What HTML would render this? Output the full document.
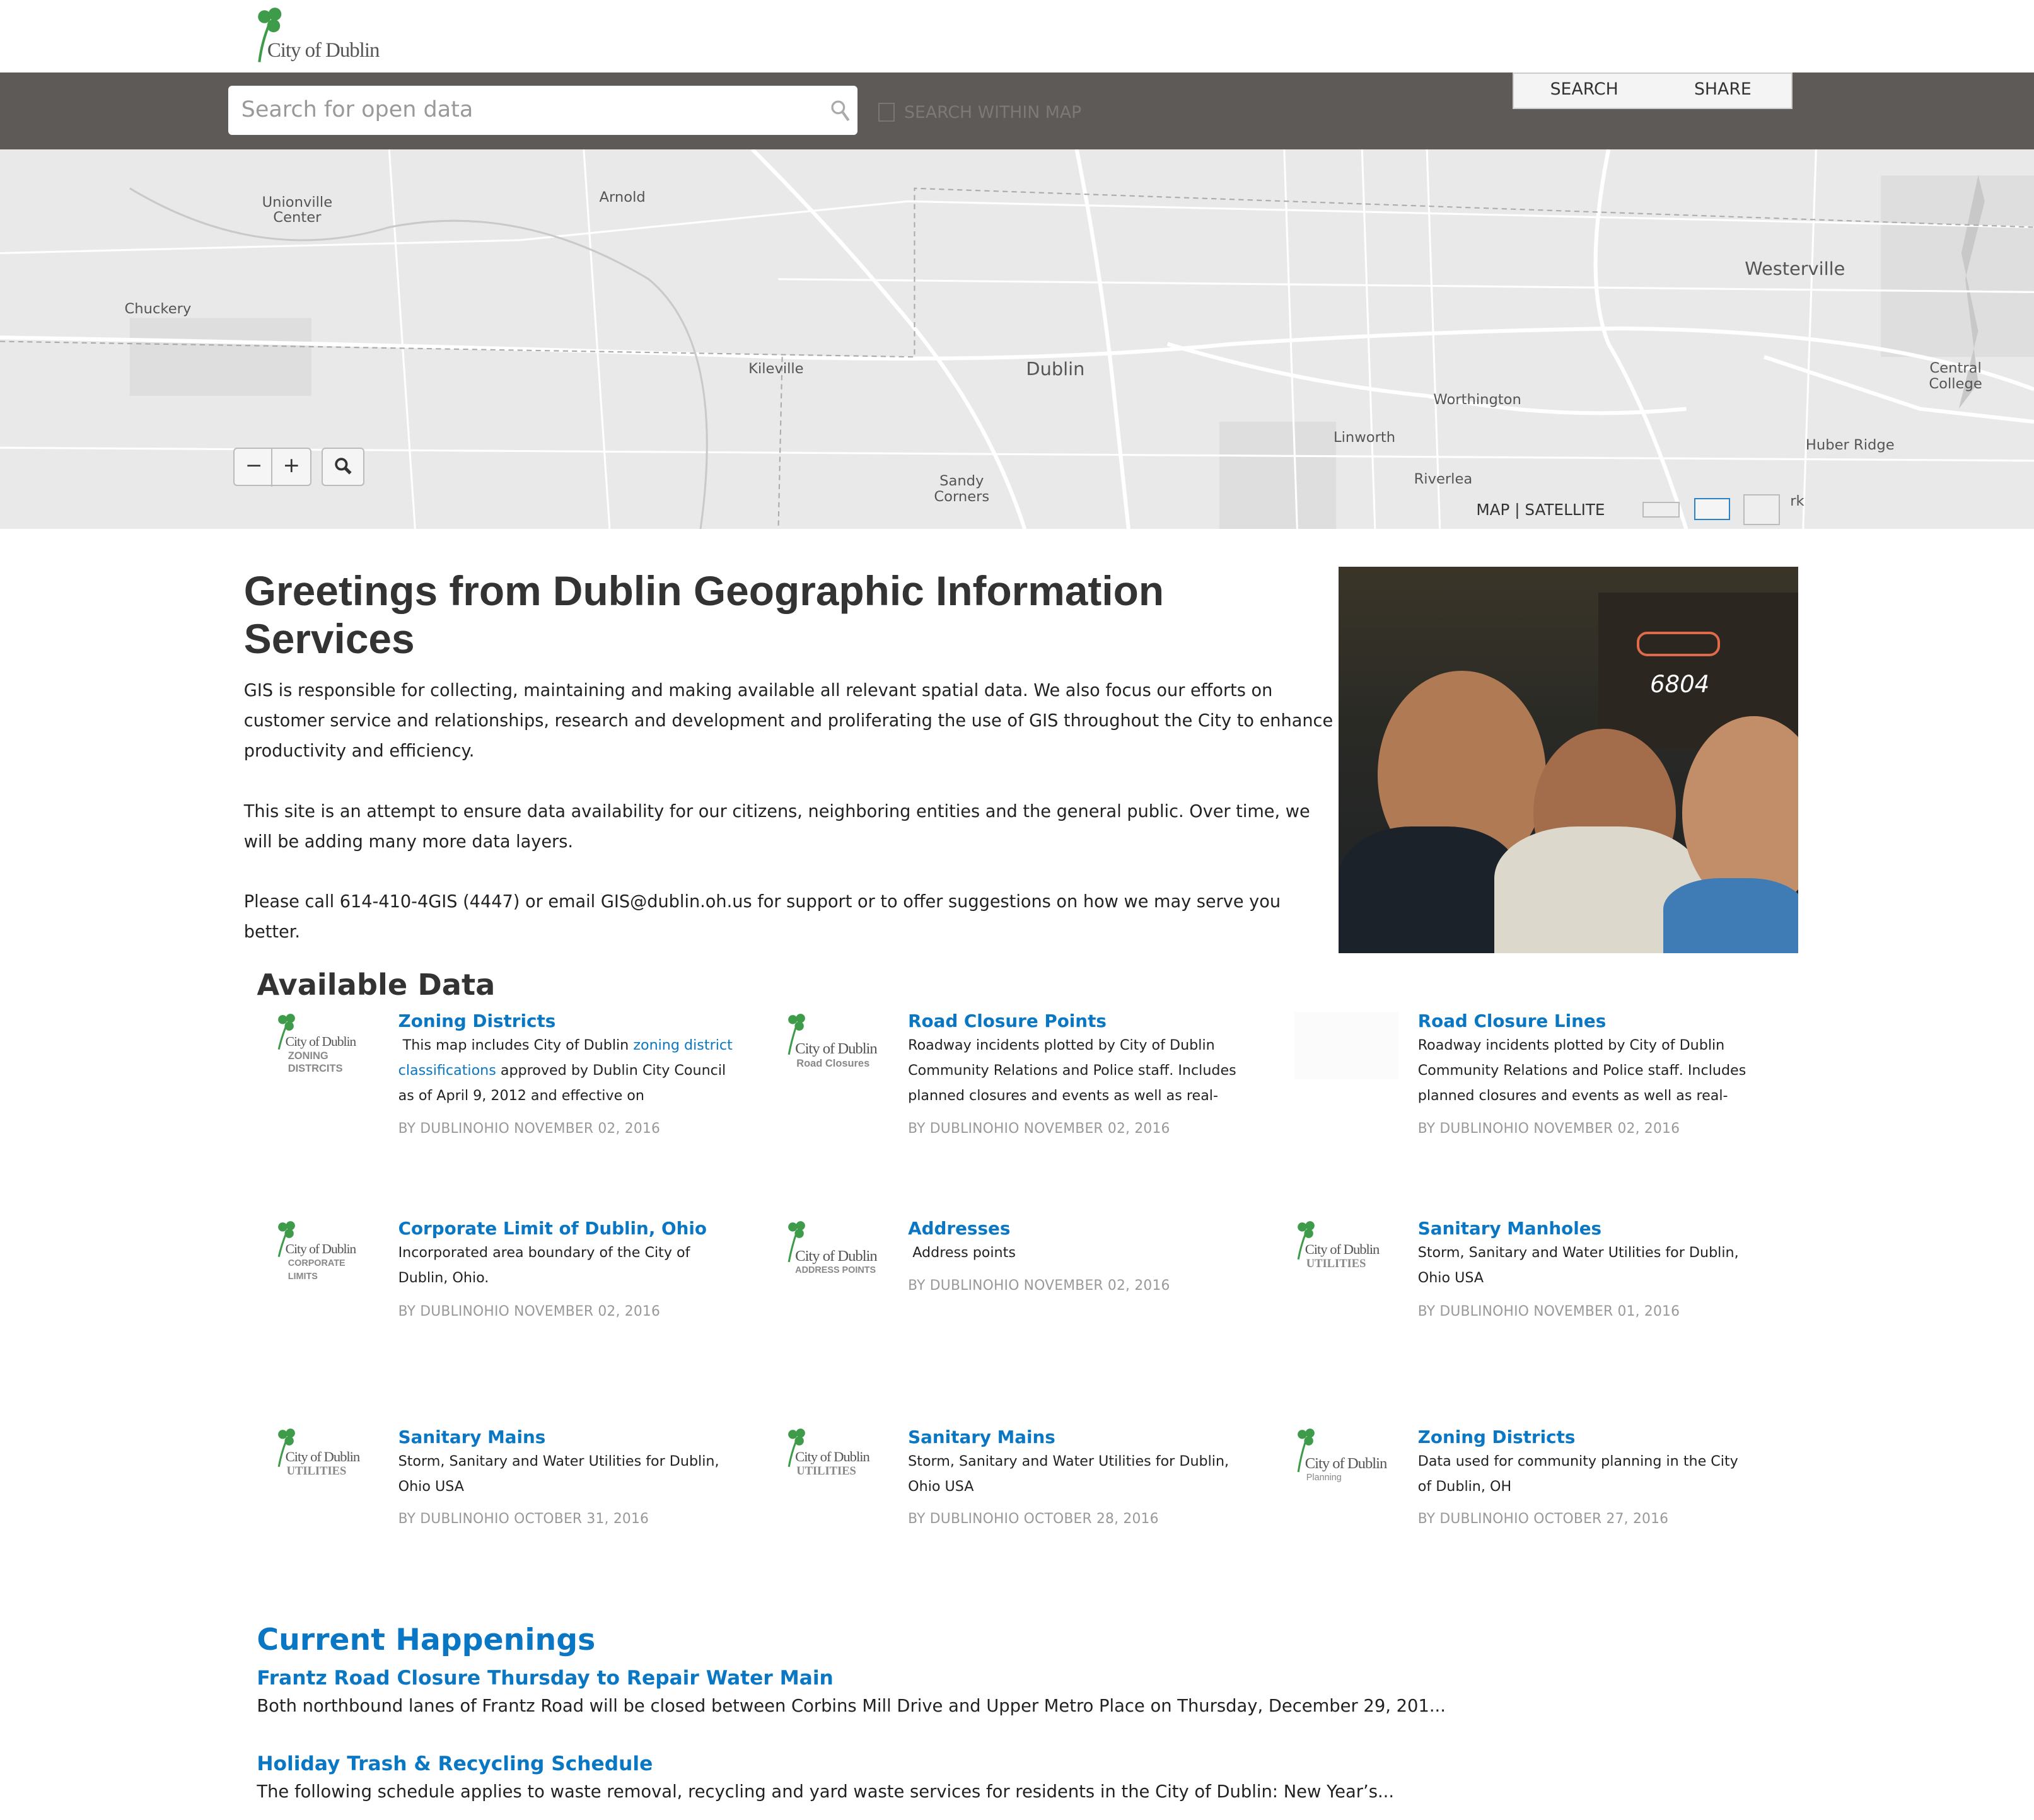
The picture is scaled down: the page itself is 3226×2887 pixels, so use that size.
<!DOCTYPE html>
<html><head><meta charset="utf-8"><style>
html{zoom:2.0574}
body{margin:0;width:1568px;height:1403px;position:relative;overflow:hidden;font-family:"DejaVu Sans","Liberation Sans",sans-serif;background:#fff;color:#222}
.a{position:absolute}
.blue{color:#0a77c4}
.t{font-size:13.5px;font-weight:bold;color:#0a77c4}
.d{font-size:10.8px;line-height:19.5px;color:#222}
.m{font-size:10.6px;color:#999;letter-spacing:.1px}
.lbl{font-size:11px;color:#555}
.logo{font-family:"Liberation Serif",serif;color:#555;font-size:11px;letter-spacing:-.5px}
.logo small{display:block;font-family:"Liberation Sans",sans-serif;font-weight:bold;color:#888;font-size:8px;letter-spacing:0}
p{margin:0}
</style></head><body>

<svg class="a" style="left:195px;top:4px" width="32" height="45" viewBox="0 0 32 45"><g fill="#3d9b4a"><circle cx="9" cy="9" r="5"/><circle cx="17" cy="7" r="5"/><circle cx="16" cy="16" r="5"/></g><path d="M13 14 Q7 28 5 44" stroke="#3d9b4a" stroke-width="2" fill="none"/></svg>
<div class="a logo" style="left:206px;top:30px;font-size:16px">City of Dublin</div>

<div class="a" style="left:0;top:56px;width:1568px;height:59px;background:#5d5a58"></div>
<div class="a" style="left:176px;top:66px;width:485px;height:38px;background:#fff;border-radius:3px"></div>
<div class="a" style="left:186px;top:75px;font-size:17px;color:#999">Search for open data</div>
<svg class="a" style="left:640px;top:77px" width="16" height="18"><circle cx="6" cy="6" r="4.5" stroke="#aaa" stroke-width="1.6" fill="none"/><path d="M9 9 L14 16" stroke="#aaa" stroke-width="2"/></svg>
<div class="a" style="left:677px;top:79px;width:11px;height:13px;border:1px solid #777"></div>
<div class="a" style="left:697px;top:79px;font-size:13px;color:#7c7978">SEARCH WITHIN MAP</div>
<div class="a" style="left:1166px;top:56px;width:214px;height:26px;background:#f4f4f4;border:1px solid #ccc"></div>
<div class="a" style="left:1195px;top:61px;font-size:13px;color:#333">SEARCH</div>
<div class="a" style="left:1306px;top:61px;font-size:13px;color:#333">SHARE</div>

<div class="a" style="left:0;top:115px;width:1568px;height:293px;background:#e9e9e9;overflow:hidden">
<svg width="1568" height="293" style="position:absolute;left:0;top:0">
<g fill="#dedede"><rect x="940" y="210" width="90" height="83"/><rect x="1450" y="20" width="118" height="140"/><rect x="100" y="130" width="140" height="60"/></g>
<path d="M1520 0 L1530 40 L1515 100 L1525 180 L1510 200 L1525 140 L1512 80 L1525 20Z" fill="#c8c8c8"/>
<g stroke="#fff" stroke-width="3" fill="none">
<path d="M0 145 Q300 150 600 160 Q800 165 950 150 Q1100 140 1250 138 Q1450 140 1568 185"/>
<path d="M580 0 Q640 60 690 120 Q760 200 790 293"/>
<path d="M830 0 Q850 100 860 200 L870 293"/>
<path d="M1240 0 Q1220 100 1240 150 Q1270 200 1300 293"/>
<path d="M900 150 Q1000 180 1100 190 Q1200 210 1300 200"/>
<path d="M1360 160 Q1420 180 1480 200 L1568 210"/>
</g>
<g stroke="#fff" stroke-width="1.5" fill="none">
<path d="M0 80 L400 70 L700 40 L1568 60"/><path d="M300 0 L320 293"/><path d="M450 0 L470 293"/><path d="M990 0 L1000 293"/><path d="M1100 0 L1110 293"/><path d="M1400 0 L1390 293"/><path d="M0 230 L1568 240"/><path d="M600 100 L1568 110"/><path d="M1050 0 L1060 293"/>
</g>
<g stroke="#aaa" stroke-width="1" stroke-dasharray="4 3" fill="none"><path d="M0 148 L705 160 L705 30 L1568 60"/><path d="M603 160 L600 293"/></g>
<path d="M100 30 Q200 90 300 60 Q400 40 500 100 Q560 150 540 293" stroke="#c9c9c9" stroke-width="1.5" fill="none"/>
</svg>
<div class="a lbl" style="left:202px;top:35px;text-align:center;line-height:12px">Unionville<br>Center</div>
<div class="a lbl" style="left:462px;top:31px">Arnold</div>
<div class="a lbl" style="left:96px;top:117px">Chuckery</div>
<div class="a lbl" style="left:577px;top:163px">Kileville</div>
<div class="a" style="left:791px;top:161px;font-size:14px;color:#555">Dublin</div>
<div class="a" style="left:1345px;top:84px;font-size:14px;color:#555">Westerville</div>
<div class="a lbl" style="left:1105px;top:187px">Worthington</div>
<div class="a lbl" style="left:1028px;top:216px">Linworth</div>
<div class="a lbl" style="left:1487px;top:163px;text-align:center;line-height:12px">Central<br>College</div>
<div class="a lbl" style="left:1392px;top:222px">Huber Ridge</div>
<div class="a lbl" style="left:1090px;top:248px">Riverlea</div>
<div class="a lbl" style="left:720px;top:250px;text-align:center;line-height:12px">Sandy<br>Corners</div>
<div class="a lbl" style="left:1380px;top:265px">rk</div>
</div>
<div class="a" style="left:180px;top:345px;width:58px;height:28px;background:#f5f5f5;border:1px solid #bbb;border-radius:3px"></div>
<div class="a" style="left:209px;top:345px;width:1px;height:30px;background:#bbb"></div>
<div class="a" style="left:189px;top:349px;font-size:16px;color:#333">−</div>
<div class="a" style="left:218px;top:349px;font-size:16px;color:#333">+</div>
<div class="a" style="left:248px;top:345px;width:31px;height:28px;background:#f5f5f5;border:1px solid #bbb;border-radius:3px"></div>
<svg class="a" style="left:257px;top:352px" width="15" height="15"><circle cx="6" cy="6" r="4" stroke="#333" stroke-width="1.8" fill="none"/><path d="M9 9 L13 13" stroke="#333" stroke-width="2.5"/></svg>
<div class="a" style="left:1138px;top:386px;font-size:12px;color:#333">MAP | SATELLITE</div>
<div class="a" style="left:1266px;top:387px;width:27px;height:10px;border:1px solid #bbb;background:#eee"></div>
<div class="a" style="left:1306px;top:384px;width:26px;height:15px;border:1px solid #2a82c8;background:#f5f5f5"></div>
<div class="a" style="left:1344px;top:381px;width:26px;height:22px;border:1px solid #bbb;background:#eee"></div>

<div class="a" style="left:188px;top:437px;font-family:'Liberation Sans',sans-serif;font-size:32px;font-weight:bold;color:#333;line-height:37px;width:830px">Greetings from Dublin Geographic Information Services</div>
<div class="a" style="left:188px;top:521px;width:840px;font-size:13.2px;line-height:23.3px;color:#222">
<p>GIS is responsible for collecting, maintaining and making available all relevant spatial data. We also focus our efforts on customer service and relationships, research and development and proliferating the use of GIS throughout the City to enhance productivity and efficiency.</p><br>
<p>This site is an attempt to ensure data availability for our citizens, neighboring entities and the general public. Over time, we will be adding many more data layers.</p><br>
<p>Please call 614-410-4GIS (4447) or email GIS@dublin.oh.us for support or to offer suggestions on how we may serve you better.</p>
</div>
<div class="a" style="left:1032px;top:437px;width:354px;height:298px;overflow:hidden;background:linear-gradient(180deg,#3a3528 0%,#2a2a25 40%,#1e2228 100%)">
<div class="a" style="left:200px;top:20px;width:154px;height:120px;background:#2b2620"></div>
<div class="a" style="left:240px;top:80px;font-size:18px;color:#fff;font-style:italic">6804</div>
<div class="a" style="left:230px;top:50px;width:60px;height:15px;border:2px solid #e06a4a;border-radius:8px"></div>
<div class="a" style="left:30px;top:80px;width:130px;height:160px;border-radius:50%;background:#b07a55"></div>
<div class="a" style="left:0;top:200px;width:140px;height:100px;background:#1c222a;border-radius:40% 40% 0 0"></div>
<div class="a" style="left:150px;top:125px;width:110px;height:130px;border-radius:50%;background:#a36c4a"></div>
<div class="a" style="left:120px;top:200px;width:160px;height:100px;background:#ddd8cc;border-radius:40% 40% 0 0"></div>
<div class="a" style="left:265px;top:115px;width:110px;height:150px;border-radius:50%;background:#c28e6a"></div>
<div class="a" style="left:250px;top:240px;width:110px;height:60px;background:#3f7bb5;border-radius:40% 40% 0 0"></div>
</div>

<div class="a" style="left:198px;top:746px;font-size:22.5px;font-weight:bold;color:#333">Available Data</div>

<svg class="a" style="left:212px;top:780px" width="20" height="30"><g fill="#3d9b4a"><circle cx="6" cy="6" r="3.5"/><circle cx="12" cy="5" r="3.5"/><circle cx="11" cy="11" r="3.5"/></g><path d="M9 10 Q5 20 3 29" stroke="#3d9b4a" stroke-width="1.5" fill="none"/></svg>
<div class="a logo" style="left:220px;top:797px;font-size:10.5px">City of Dublin<small style="margin-left:2px;line-height:10px">ZONING<br>DISTRCITS</small></div>
<div class="a t" style="left:307px;top:779px">Zoning Districts</div>
<div class="a d" style="left:307px;top:796px;width:260px">&nbsp;This map includes City of Dublin <span class="blue">zoning district classifications</span> approved by Dublin City Council as of April 9, 2012 and effective on</div>
<div class="a m" style="left:307px;top:864px">BY DUBLINOHIO NOVEMBER 02, 2016</div>

<svg class="a" style="left:605px;top:780px" width="20" height="34"><g fill="#3d9b4a"><circle cx="6" cy="6" r="3.5"/><circle cx="12" cy="5" r="3.5"/><circle cx="11" cy="11" r="3.5"/></g><path d="M9 10 Q5 22 3 33" stroke="#3d9b4a" stroke-width="1.5" fill="none"/></svg>
<div class="a logo" style="left:613px;top:802px;font-size:12px">City of Dublin<small style="font-size:8px;margin-left:1px">Road Closures</small></div>
<div class="a t" style="left:700px;top:779px">Road Closure Points</div>
<div class="a d" style="left:700px;top:796px;width:260px">Roadway incidents plotted by City of Dublin Community Relations and Police staff. Includes planned closures and events as well as real-</div>
<div class="a m" style="left:700px;top:864px">BY DUBLINOHIO NOVEMBER 02, 2016</div>

<div class="a" style="left:998px;top:780px;width:80px;height:52px;background:#fbfbfb"></div>
<div class="a t" style="left:1093px;top:779px">Road Closure Lines</div>
<div class="a d" style="left:1093px;top:796px;width:260px">Roadway incidents plotted by City of Dublin Community Relations and Police staff. Includes planned closures and events as well as real-</div>
<div class="a m" style="left:1093px;top:864px">BY DUBLINOHIO NOVEMBER 02, 2016</div>

<svg class="a" style="left:212px;top:940px" width="20" height="30"><g fill="#3d9b4a"><circle cx="6" cy="6" r="3.5"/><circle cx="12" cy="5" r="3.5"/><circle cx="11" cy="11" r="3.5"/></g><path d="M9 10 Q5 20 3 29" stroke="#3d9b4a" stroke-width="1.5" fill="none"/></svg>
<div class="a logo" style="left:220px;top:957px;font-size:10.5px">City of Dublin<small style="font-size:7px;line-height:10px;margin-left:2px">CORPORATE<br>LIMITS</small></div>
<div class="a t" style="left:307px;top:939px">Corporate Limit of Dublin, Ohio</div>
<div class="a d" style="left:307px;top:956px;width:240px">Incorporated area boundary of the City of Dublin, Ohio.</div>
<div class="a m" style="left:307px;top:1005px">BY DUBLINOHIO NOVEMBER 02, 2016</div>

<svg class="a" style="left:605px;top:940px" width="20" height="34"><g fill="#3d9b4a"><circle cx="6" cy="6" r="3.5"/><circle cx="12" cy="5" r="3.5"/><circle cx="11" cy="11" r="3.5"/></g><path d="M9 10 Q5 22 3 33" stroke="#3d9b4a" stroke-width="1.5" fill="none"/></svg>
<div class="a logo" style="left:613px;top:962px;font-size:12px">City of Dublin<small style="font-size:7px">ADDRESS POINTS</small></div>
<div class="a t" style="left:700px;top:939px">Addresses</div>
<div class="a d" style="left:700px;top:956px">&nbsp;Address points</div>
<div class="a m" style="left:700px;top:985px">BY DUBLINOHIO NOVEMBER 02, 2016</div>

<svg class="a" style="left:998px;top:940px" width="20" height="32"><g fill="#3d9b4a"><circle cx="6" cy="6" r="3.5"/><circle cx="12" cy="5" r="3.5"/><circle cx="11" cy="11" r="3.5"/></g><path d="M9 10 Q5 20 3 31" stroke="#3d9b4a" stroke-width="1.5" fill="none"/></svg>
<div class="a logo" style="left:1006px;top:957px;font-size:11px">City of Dublin<small style="font-family:'Liberation Serif',serif;font-size:9px;margin-left:1px">UTILITIES</small></div>
<div class="a t" style="left:1093px;top:939px">Sanitary Manholes</div>
<div class="a d" style="left:1093px;top:956px;width:275px">Storm, Sanitary and Water Utilities for Dublin, Ohio USA</div>
<div class="a m" style="left:1093px;top:1005px">BY DUBLINOHIO NOVEMBER 01, 2016</div>

<svg class="a" style="left:212px;top:1100px" width="20" height="32"><g fill="#3d9b4a"><circle cx="6" cy="6" r="3.5"/><circle cx="12" cy="5" r="3.5"/><circle cx="11" cy="11" r="3.5"/></g><path d="M9 10 Q5 20 3 31" stroke="#3d9b4a" stroke-width="1.5" fill="none"/></svg>
<div class="a logo" style="left:220px;top:1117px;font-size:11px">City of Dublin<small style="font-family:'Liberation Serif',serif;font-size:9px;margin-left:1px">UTILITIES</small></div>
<div class="a t" style="left:307px;top:1100px">Sanitary Mains</div>
<div class="a d" style="left:307px;top:1117px;width:275px">Storm, Sanitary and Water Utilities for Dublin, Ohio USA</div>
<div class="a m" style="left:307px;top:1165px">BY DUBLINOHIO OCTOBER 31, 2016</div>

<svg class="a" style="left:605px;top:1100px" width="20" height="32"><g fill="#3d9b4a"><circle cx="6" cy="6" r="3.5"/><circle cx="12" cy="5" r="3.5"/><circle cx="11" cy="11" r="3.5"/></g><path d="M9 10 Q5 20 3 31" stroke="#3d9b4a" stroke-width="1.5" fill="none"/></svg>
<div class="a logo" style="left:613px;top:1117px;font-size:11px">City of Dublin<small style="font-family:'Liberation Serif',serif;font-size:9px;margin-left:1px">UTILITIES</small></div>
<div class="a t" style="left:700px;top:1100px">Sanitary Mains</div>
<div class="a d" style="left:700px;top:1117px;width:275px">Storm, Sanitary and Water Utilities for Dublin, Ohio USA</div>
<div class="a m" style="left:700px;top:1165px">BY DUBLINOHIO OCTOBER 28, 2016</div>

<svg class="a" style="left:998px;top:1100px" width="20" height="36"><g fill="#3d9b4a"><circle cx="6" cy="6" r="3.5"/><circle cx="12" cy="5" r="3.5"/><circle cx="11" cy="11" r="3.5"/></g><path d="M9 10 Q5 22 3 35" stroke="#3d9b4a" stroke-width="1.5" fill="none"/></svg>
<div class="a logo" style="left:1006px;top:1122px;font-size:12px">City of Dublin<small style="font-weight:normal;font-size:7px;margin-left:1px">Planning</small></div>
<div class="a t" style="left:1093px;top:1100px">Zoning Districts</div>
<div class="a d" style="left:1093px;top:1117px;width:260px">Data used for community planning in the City of Dublin, OH</div>
<div class="a m" style="left:1093px;top:1165px">BY DUBLINOHIO OCTOBER 27, 2016</div>

<div class="a" style="left:198px;top:1251px;font-size:23px;font-weight:bold;color:#0a77c4">Current Happenings</div>
<div class="a" style="left:198px;top:1285px;font-size:15.2px;font-weight:bold;color:#0a77c4">Frantz Road Closure Thursday to Repair Water Main</div>
<div class="a" style="left:198px;top:1308px;font-size:13.3px;color:#222">Both northbound lanes of Frantz Road will be closed between Corbins Mill Drive and Upper Metro Place on Thursday, December 29, 201...</div>
<div class="a" style="left:198px;top:1351px;font-size:15.2px;font-weight:bold;color:#0a77c4">Holiday Trash &amp; Recycling Schedule</div>
<div class="a" style="left:198px;top:1374px;font-size:13.3px;color:#222">The following schedule applies to waste removal, recycling and yard waste services for residents in the City of Dublin: New Year’s...</div>
</body></html>
